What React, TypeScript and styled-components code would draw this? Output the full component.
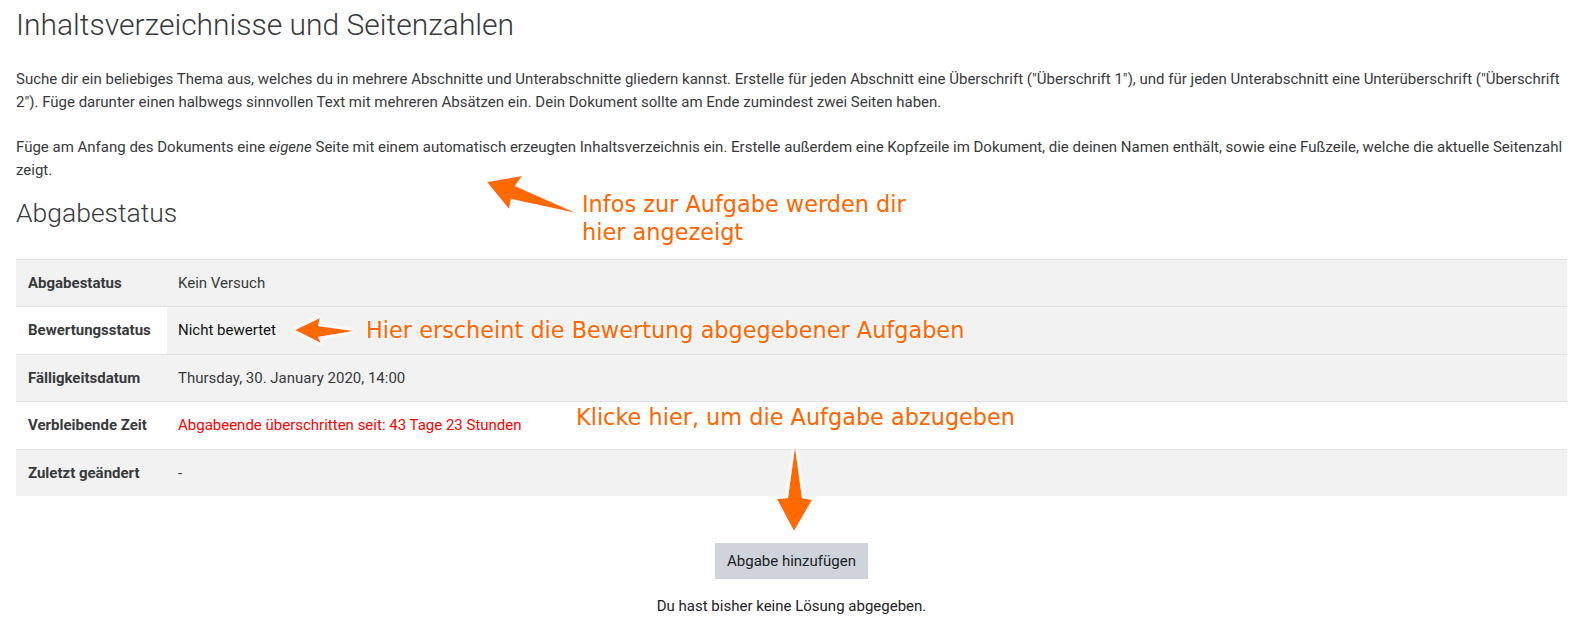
import React from "react";
import styled, { createGlobalStyle } from "styled-components";

const GlobalStyle = createGlobalStyle`
  html, body {
    margin: 0;
    padding: 0;
    background: #ffffff;
  }
  body {
    font-family: Roboto, "Liberation Sans", sans-serif;
    font-size: 15px;
    line-height: 1.5;
    color: #373a3c;
  }
`;

const Page = styled.main`
  position: relative;
  padding: 7px 19px 0 16px;
  height: 626px;
  box-sizing: border-box;
  overflow: hidden;
`;

const Title = styled.h2`
  margin: 0 0 25px;
  font-size: 30px;
  font-weight: 300;
  line-height: 1.2;
  color: #373a3c;
`;

const Description = styled.div`
  display: flex;
  flex-direction: column;
  gap: 23px;
  margin-bottom: 16px;
`;

const Intro = styled.p`
  margin: 0;
`;

const SubTitle = styled.h3`
  margin: 0 0 30px;
  font-size: 26.5px;
  font-weight: 300;
  line-height: 1.2;
  color: #373a3c;
`;

const Table = styled.table`
  width: 100%;
  border-collapse: collapse;
`;

const Row = styled.tr<{ $striped?: boolean }>`
  background: ${(p) => (p.$striped ? "#f2f2f2" : "#ffffff")};
`;

const Label = styled.th`
  width: 127px;
  padding: 12px;
  text-align: left;
  font-weight: 700;
  color: #373a3c;
  border-top: 1px solid #dee2e6;
`;

const Value = styled.td<{ $tone?: "red" | "dark"; $shaded?: boolean }>`
  padding: 12px 12px 12px 11px;
  border-top: 1px solid #dee2e6;
  color: ${(p) => (p.$tone === "red" ? "#ff0000" : p.$tone === "dark" ? "#111" : "#373a3c")};
  background: ${(p) => (p.$shaded ? "#f2f2f2" : "transparent")};
`;

const Actions = styled.div`
  display: flex;
  flex-direction: column;
  align-items: center;
  padding-top: 47px;
  gap: 16px;
`;

const Button = styled.button`
  font-family: inherit;
  font-size: 15px;
  line-height: 22px;
  color: #1d2125;
  background: #ced4da;
  border: none;
  border-radius: 0;
  padding: 7px 12px;
`;

const Hint = styled.div`
  color: #1d2125;
`;

const Note = styled.div<{ $x: number; $y: number }>`
  position: absolute;
  left: ${(p) => p.$x}px;
  top: ${(p) => p.$y}px;
  font-family: "DejaVu Sans", Verdana, sans-serif;
  font-size: 22.4px;
  line-height: 28px;
  color: #ff6600;
  white-space: nowrap;
  text-shadow: 0 0 3px #fff, 0 0 3px #fff;
`;

const Arrows = styled.svg`
  position: absolute;
  left: 0;
  top: 0;
  width: 1586px;
  height: 626px;
  pointer-events: none;
`;

const rows = [
  { label: "Abgabestatus", value: "Kein Versuch", striped: true },
  { label: "Bewertungsstatus", value: "Nicht bewertet", striped: false, shaded: true, tone: "dark" as const },
  { label: "Fälligkeitsdatum", value: "Thursday, 30. January 2020, 14:00", striped: true },
  { label: "Verbleibende Zeit", value: "Abgabeende überschritten seit: 43 Tage 23 Stunden", striped: false, tone: "red" as const },
  { label: "Zuletzt geändert", value: "-", striped: true },
];

export default function App() {
  return (
    <>
      <GlobalStyle />
      <Page>
        <Title>Inhaltsverzeichnisse und Seitenzahlen</Title>
        <Description>
          <Intro>
            Suche dir ein beliebiges Thema aus, welches du in mehrere Abschnitte und Unterabschnitte gliedern kannst.
            Erstelle für jeden Abschnitt eine Überschrift ("Überschrift 1"), und für jeden Unterabschnitt eine
            Unterüberschrift ("Überschrift 2"). Füge darunter einen halbwegs sinnvollen Text mit mehreren Absätzen ein.
            Dein Dokument sollte am Ende zumindest zwei Seiten haben.
          </Intro>
          <Intro>
            Füge am Anfang des Dokuments eine <em>eigene</em> Seite mit einem automatisch erzeugten Inhaltsverzeichnis
            ein. Erstelle außerdem eine Kopfzeile im Dokument, die deinen Namen enthält, sowie eine Fußzeile, welche
            die aktuelle Seitenzahl zeigt.
          </Intro>
        </Description>
        <SubTitle>Abgabestatus</SubTitle>
        <Table>
          <tbody>
            {rows.map((r) => (
              <Row key={r.label} $striped={r.striped}>
                <Label>{r.label}</Label>
                <Value $tone={r.tone} $shaded={r.shaded}>
                  {r.value}
                </Value>
              </Row>
            ))}
          </tbody>
        </Table>
        <Actions>
          <Button>Abgabe hinzufügen</Button>
          <Hint>Du hast bisher keine Lösung abgegeben.</Hint>
        </Actions>

        <Arrows viewBox="0 0 1586 626">
          <defs>
            <filter id="glow" x="-20%" y="-20%" width="140%" height="140%">
              <feMorphology in="SourceAlpha" operator="dilate" radius="2" result="d" />
              <feGaussianBlur in="d" stdDeviation="1" result="b" />
              <feFlood floodColor="#ffffff" />
              <feComposite in2="b" operator="in" result="w" />
              <feMerge>
                <feMergeNode in="w" />
                <feMergeNode in="SourceGraphic" />
              </feMerge>
            </filter>
          </defs>
          <g fill="#ff6a00" filter="url(#glow)">
            <polygon points="487,182 522,176 515,186 576,213 511,199 509,209" />
            <polygon points="295,330 320,318 318,326 354,331 318,337 321,343" />
            <polygon points="795,447 802,498 812,500 794,531 777,499 788,498" />
          </g>
        </Arrows>
        <Note $x={582} $y={190}>
          Infos zur Aufgabe werden dir
          <br />
          hier angezeigt
        </Note>
        <Note $x={366} $y={316}>
          Hier erscheint die Bewertung abgegebener Aufgaben
        </Note>
        <Note $x={576} $y={403}>
          Klicke hier, um die Aufgabe abzugeben
        </Note>
      </Page>
    </>
  );
}
